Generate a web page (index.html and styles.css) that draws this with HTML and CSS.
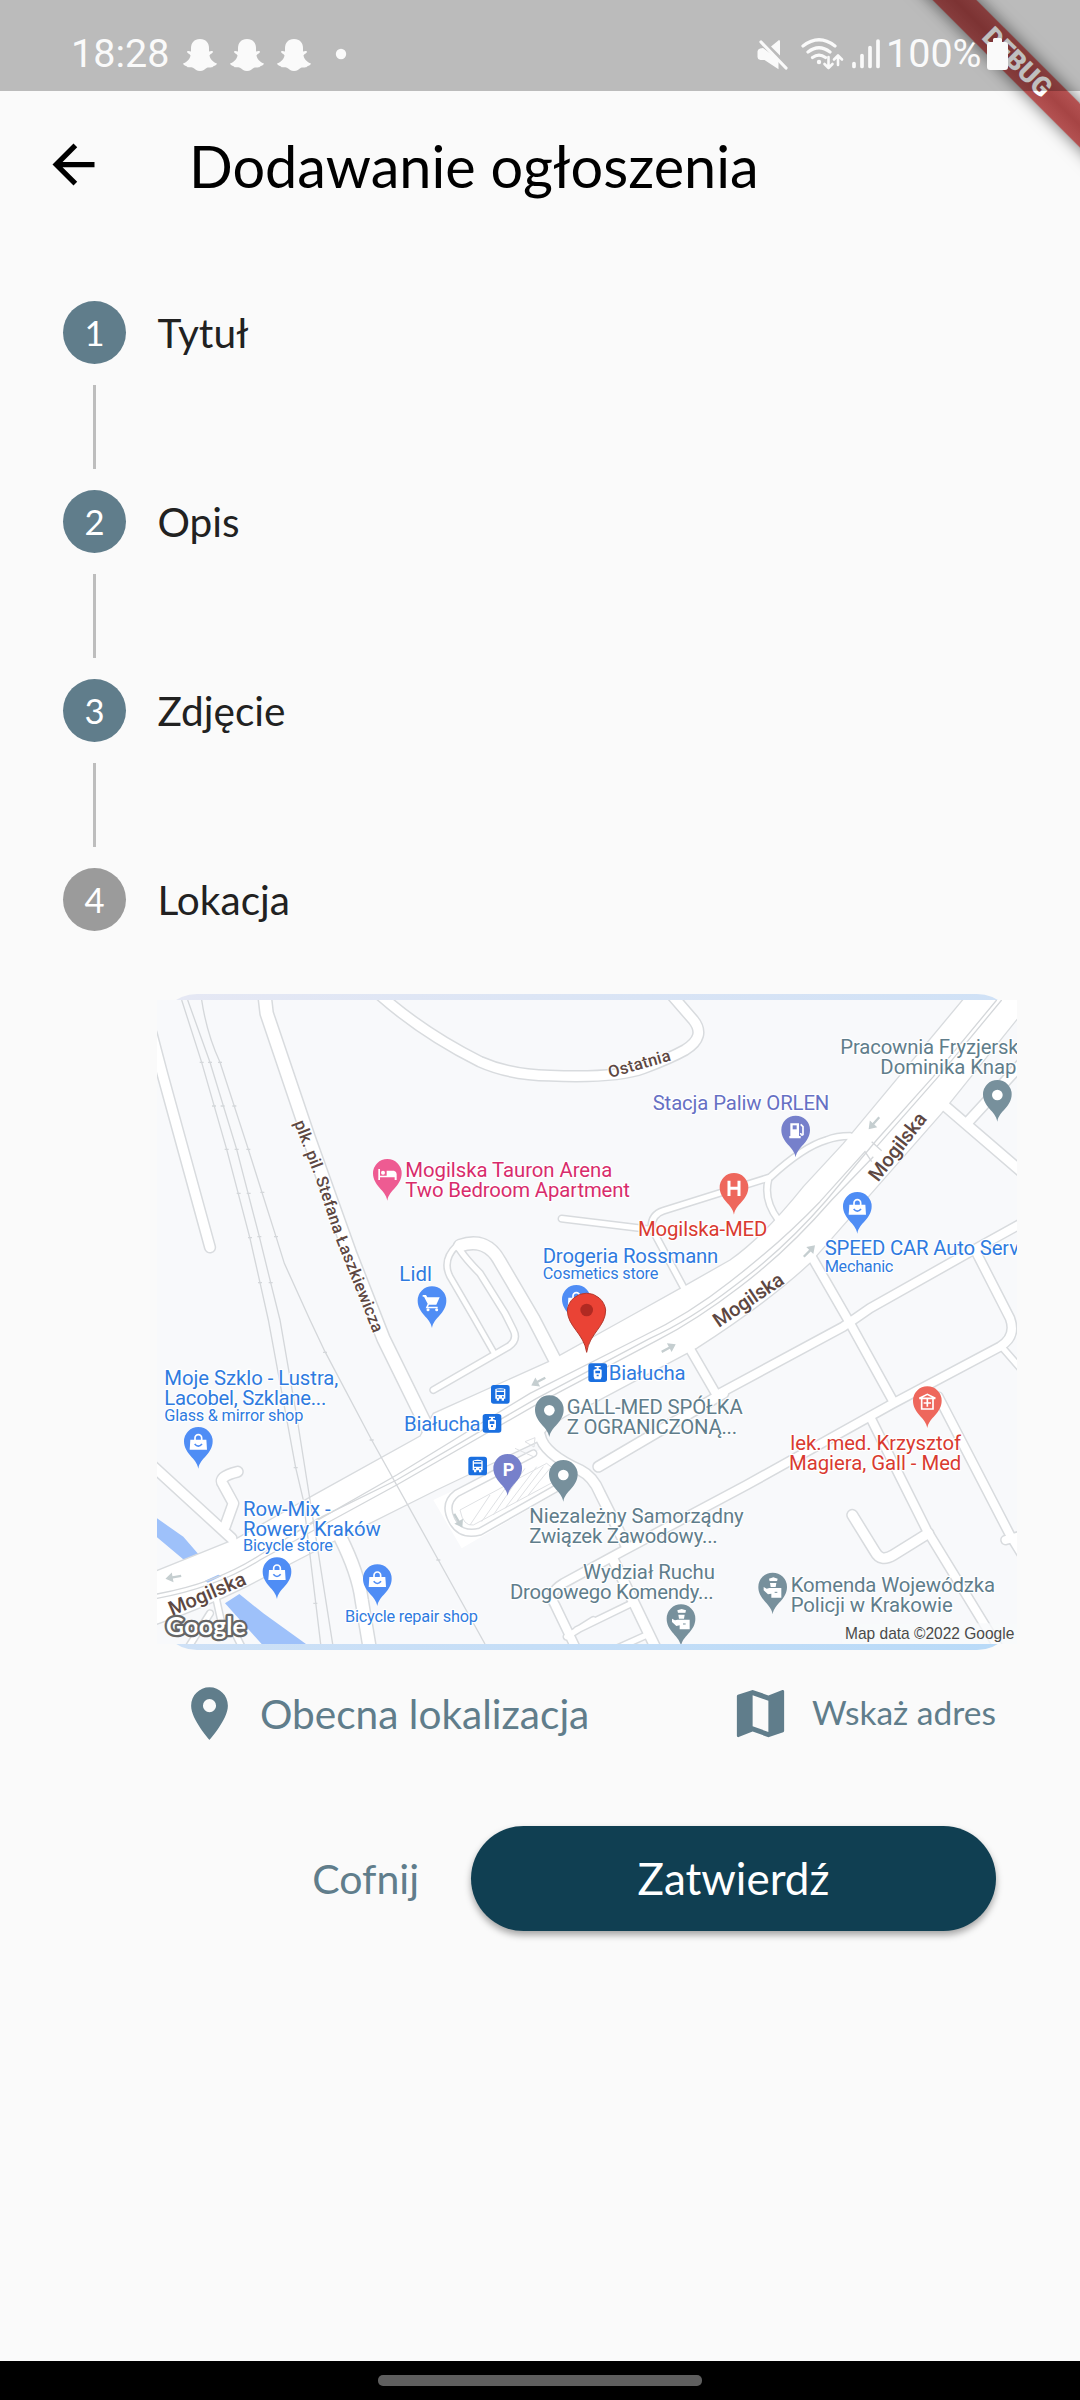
FILE: index.html
```html
<!DOCTYPE html>
<html lang="pl">
<head>
<meta charset="utf-8">
<title>Dodawanie ogłoszenia</title>
<link rel="stylesheet" href="styles.css">
</head>
<body>
<div class="screen">
  <div class="debug"><span class="debug-band">DEBUG</span></div>

  <header class="status">
    <span class="clock">18:28</span>
    <svg class="notes" width="164" height="34" viewBox="0 0 164 34">
      <defs><path id="ghost" d="M17 1C11 1 8 5 8 10v3.500c-2-.8-4-.8-4 .2 0 1.500 2.500 2 3.500 3.500C7 21 4 24 0 25.500c.5 2 3 2 4 3 .5 1.500 4 .5 6 1.200C12 31 14 33 17 33s5-2 7-3.300c2-.7 5.500.3 6-1.200 1-1 3.500-1 4-3-4-1.500-7-4.500-7.500-8.300 1-1.500 3.500-2 3.500-3.500 0-1-2-1-4-.2V10c0-5-3-9-9-9z"/></defs>
      <use href="#ghost"/><use href="#ghost" x="47"/><use href="#ghost" x="94"/>
      <circle cx="158" cy="16" r="5.200"/>
    </svg>
    <svg class="signals" width="130" height="34" viewBox="757 38 130 34">
      <path d="M760 48.500q-2.500 1-2.500 3v5q0 3 3 3.500h4l14 9.300v-9.800L763 48z M771 46.500l8-6.500q1 0 1 1.500v14z"/>
      <path class="line" d="M761 42l25 26"/>
      <g class="line">
        <path d="M803 46q16-12.500 32 0M808 52q11-8.500 22 0M812.500 57.500q6.500-4.800 13 0"/>
        <path class="thin" d="M828.500 57v11m-4-4l4 4 4-4M838 65V56m-4 3.500l4-4 4 4"/>
      </g>
      <circle cx="819" cy="62" r="2.200"/>
      <path class="bars" d="M854 63.500v3M862 55.500v11M870 47.500v19M878 41v25.500"/>
    </svg>
    <span class="percent">100%</span>
    <svg class="battery" width="21" height="32" viewBox="0 0 21 32"><path d="M6 4V1.500Q6 0 7.500 0h6Q15 0 15 1.500V4h3q3 0 3 3v22q0 3-3 3H3q-3 0-3-3V7q0-3 3-3z"/></svg>
  </header>

  <div class="appbar">
    <svg class="back" width="63" height="63" viewBox="0 0 24 24"><path d="M20 11H7.830l5.590-5.590L12 4l-8 8 8 8 1.410-1.410L7.830 13H20v-2z"/></svg>
    <h1>Dodawanie ogłoszenia</h1>
  </div>

  <main>
    <ol class="steps">
      <li><span class="num">1</span><span>Tytuł</span></li>
      <li class="link"></li>
      <li><span class="num">2</span><span>Opis</span></li>
      <li class="link"></li>
      <li><span class="num">3</span><span>Zdjęcie</span></li>
      <li class="link"></li>
      <li><span class="num off">4</span><span>Lokacja</span></li>
    </ol>

    <section class="content">
      <div class="mapbox">
        <svg class="map" width="860" height="644" viewBox="21 60 2580 1932" preserveAspectRatio="none">
          <defs>
            <path id="pin" d="M0 82C-5 50-43 38-43 0A43 43 0 0 1 43 0C43 38 5 50 0 82Z"/>
            <g id="bag"><path fill="#fff" d="M-24-8h48l2 30h-52z"/><path fill="none" stroke="#fff" stroke-width="5" d="M-10-6v-7a10 10 0 0 1 20 0v7"/><path fill="none" stroke="#4f8df5" stroke-width="5" d="M-11 5q11 13 22 0"/></g>
            <g id="cop"><path fill="#fff" d="M-11-27l13-4 13 4-2 8H-9zM-8-14h19l-2 12H-6zM-27-2l9 5 8-2h36v29H-4V18l-10 2-13-12z"/><path stroke="#77909c" stroke-width="3" d="M-10-18h24M6 14h8"/></g>
            <g id="bus"><rect x="-28" y="-28" width="56" height="56" rx="8" fill="#1a6fe0"/><path fill="#fff" d="M-15-16q15-5 30 0v29h-4v6h-7v-6h-8v6h-7v-6h-4z"/><path stroke="#1a6fe0" stroke-width="4" d="M-11-13h22"/><path fill="#1a6fe0" d="M-11-7h22v9h-22zM-10 6h5v4h-5zM5 6h5v4H5z"/></g>
            <g id="tram"><rect x="-28" y="-28" width="56" height="56" rx="8" fill="#1a6fe0"/><path fill="#fff" d="M-9-20H9v4H3v4l9 3v21l-3 8H-9l-3-8V-9l9-3v-4h-6z"/><path fill="#1a6fe0" d="M-7-6H7v8H-7zM-3 6h6v5h-6z"/></g>
            <path id="arrow" d="M-24-3H2v-12L24 0 2 15V4h-26z" fill="#c5ced0"/>
            <g id="roads">
              <path class="w28" d="M5 160L38 285 180 802"/>
              <path class="w36" d="M343 40L350 100 475 470 600 820 700 1075 835 1350"/>
              <path class="w28" d="M690 45Q820 160 990 245Q1080 285 1200 287Q1400 295 1480 265Q1560 235 1605 210Q1670 170 1630 120L1565 45"/>
              <path class="w16" d="M1235 716L1500 748"/>
              <path class="w16" d="M1505 750Q1500 705 1540 692L1700 642 1860 592Q1960 500 2030 480Q2060 468 2100 468"/>
              <path class="w16" d="M1505 745L1610 940M1855 600Q1840 660 1885 720"/>
              <path class="w34" d="M930 797Q1010 770 1050 845L1150 1015 1225 1160"/>
              <path class="w14" d="M920 797Q875 840 900 890L970 1010 1030 1115"/>
              <path class="w16" d="M930 810Q950 840 990 880L1065 1000 1090 1050Q1105 1080 1075 1100L850 1230"/>
              <path class="w28" d="M2370 365L2620 580M2455 425L2620 245"/>
              <path class="w24" d="M2620 727L2470 810 2160 985Q2110 1020 2080 1040L1700 1245"/>
              <path class="w24" d="M1985 830L2100 1030 2230 1265"/>
              <path class="w24" d="M2475 810L2580 1015Q2600 1070 2550 1100L2230 1270 1790 1515 1420 1712 1240 1810Q1190 1840 1215 1875L1280 2010"/>
              <path class="w24" d="M1610 1090L1700 1245"/>
              <path class="w28" d="M1720 1240L1345 1460"/>
              <path class="w24" d="M2160 1310L2330 1650 2550 2010"/>
              <path class="w24" d="M2365 1250L2580 1665 2620 1730M2567 1680L2620 1665"/>
              <path class="w28" d="M2107 1605L2175 1715Q2192 1748 2230 1725L2335 1660"/>
              <path class="w16" d="M2555 1100L2620 1175"/>
              <path class="w28" d="M1170 1365Q1180 1420 1290 1470Q1330 1490 1350 1540L1430 1700M1390 1740L1520 2010"/>
              <path class="w16" d="M1280 1950L1445 1870M1390 2010L1490 1965M1250 1970L1330 1920"/>
              <path class="w28" d="M5 1455L245 1675M263 1475Q200 1490 220 1515L250 1570 225 1640"/>
              <path class="w36" d="M570 1670Q625 1780 635 1860L660 2010"/>
              <path class="w16" d="M195 1840L215 1930M110 2010L180 1900M235 1920L280 2010"/>
              <path class="w16" d="M1150 1420L920 1540Q880 1570 905 1620Q930 1670 990 1655L1245 1510"/>
            </g>
          </defs>
          <rect x="21" y="60" width="2580" height="1932" fill="#f8f9fb"/>
          <path fill="#9ec1fa" d="M21 1615L100 1670 150 1728 105 1742 21 1672zM268 1842L340 1900 468 1992H335L225 1870z"/>
          <path fill="#fff" d="M850 1560L1190 1400 1270 1510 935 1705z"/>
          <g class="edge"><use href="#roads"/></g>
          <path fill="#fff" stroke="#d8dbde" stroke-width="4" d="M0 1780L260 1675 500 1540 810 1368 850 1300 1195 1145 1420 1020 1590 925 1740 840Q1840 770 1960 620L2080 490 2450 45H2660L2375 400 1980 850Q1850 970 1640 1105L1330 1270Q1200 1320 1165 1385L860 1530 560 1680 290 1820Q150 1890 0 1940z"/>
          <g class="fill"><use href="#roads"/></g>
          <path fill="none" stroke="#dfe1e4" stroke-width="3" d="M930 1590L1190 1450 1240 1490 970 1635Q940 1640 930 1590zM960 1635l60-90M995 1625l85-120M1030 1605l95-140M1065 1585l95-125M1100 1565l80-105M1135 1545l65-80M1095 1405l55 25M1125 1385l30-12-3 28z"/>
          <path fill="#9ec1fa" d="M165 1802l40-18 10 4-42 20z"/>
          <g class="rail">
            <path d="M95 60L155 247 230 508 300 775 330 908 355 1020 437 1463 460 1560 512 1992"/>
            <path d="M113 60L180 247 260 508 328 770 362 908 390 1020 442 1320 480 1560 548 1992"/>
            <path d="M155 60Q170 160 210 247L295 508 378 770 403 850 480 1020 525 1115 665 1380 865 1740 1005 1992"/>
            <path d="M21 1842Q200 1810 330 1725L500 1618 740 1500 1160 1255 1500 1075Q1620 1020 1750 920Q1900 810 2030 660L2180 480 2350 290 2540 60"/>
            <path d="M21 1855Q200 1822 330 1740L520 1635 740 1515 1180 1262 1520 1082Q1640 1020 1770 920Q1910 815 2045 660L2170 530"/>
            <path d="M420 1668L740 1485 1140 1240 1480 1068Q1620 1000 1740 905Q1890 790 2010 665L2145 515 2165 545M2165 485L2195 512M2180 500L2365 290 2555 60"/>
            <path d="M149 247h12M174 247h12M204 247h12M186 378h12M212 378h12M247 378h12M224 508h12M254 508h12M289 508h12M260 640h12M290 640h12M331 637h12M294 773h12M322 770h12M372 770h12M324 908h12M356 908h12M659 1380h12M431 1463h12M859 1740h12M490 1870h12M519 1117h12"/>
          </g>
          <use href="#arrow" transform="translate(2172 430) rotate(132)"/>
          <use href="#arrow" transform="translate(1978 813) rotate(-45)"/>
          <use href="#arrow" transform="translate(1556 1104) rotate(-28)"/>
          <use href="#arrow" transform="translate(1165 1205) rotate(152)"/>
          <use href="#arrow" transform="translate(70 1792) rotate(170)"/>
          <use href="#arrow" transform="translate(925 1622) rotate(60)"/>

          <g class="street">
            <path id="lasz" d="M432 428L500 605 556 775 672 1065" fill="none" stroke="none"/>
            <text class="s48"><textPath href="#lasz" textLength="676">plk. pil. Stefana Łaszkiewicza</textPath></text>
            <text class="s48" transform="translate(1380 294) rotate(-16)" textLength="192">Ostatnia</text>
            <text transform="translate(2184 608) rotate(-52)" textLength="242">Mogilska</text>
            <text transform="translate(1706 1044) rotate(-34)" textLength="242">Mogilska</text>
            <text transform="translate(66 1908) rotate(-23)" textLength="246">Mogilska</text>
          </g>

          <g fill="#ee5b92"><use href="#pin" x="712" y="580"/></g>
          <g fill="#4f8df5"><use href="#pin" x="846" y="962"/><use href="#pin" x="1279" y="958"/><use href="#pin" x="2122" y="679"/><use href="#pin" x="145" y="1384"/><use href="#pin" x="381" y="1775"/><use href="#pin" x="682" y="1796"/></g>
          <g fill="#7680cb"><use href="#pin" x="1937" y="450"/><use href="#pin" x="1073" y="1465"/></g>
          <g fill="#ee675c"><use href="#pin" x="1752" y="622"/><use href="#pin" x="2332" y="1262"/></g>
          <g fill="#77909c"><use href="#pin" x="2542" y="343"/><use href="#pin" x="1198" y="1289"/><use href="#pin" x="1240" y="1483"/><use href="#pin" x="1868" y="1821"/><use href="#pin" x="1593" y="1916"/></g>
          <g fill="#fff"><circle cx="2542" cy="345" r="16"/><circle cx="1198" cy="1291" r="16"/><circle cx="1240" cy="1485" r="16"/></g>
          <use href="#bag" x="2122" y="682"/><use href="#bag" x="145" y="1387"/><use href="#bag" x="381" y="1778"/><use href="#bag" x="682" y="1799"/><use href="#bag" x="1279" y="961"/>
          <use href="#cop" x="1868" y="1823"/><use href="#cop" x="1593" y="1918"/>
          <path fill="#fff" d="M685 567h5v20h20v-15h22q8 2 8 10v18h-6v-8h-44v8h-5z"/><circle cx="699" cy="578" r="6" fill="#fff"/>
          <path fill="#fff" d="M818 945h10l4 7h37l-10 22h-22l-3 6h29v5h-36l6-14-11-21h-4z"/><circle cx="834" cy="989" r="4.500" fill="#fff"/><circle cx="860" cy="989" r="4.500" fill="#fff"/>
          <path fill="#fff" d="M1921 430h26v38h5v7h-34v-7h3z"/><rect x="1928" y="436" width="12" height="12" fill="#7680cb"/><path fill="none" stroke="#fff" stroke-width="5" d="M1952 433l7 7v24q-6 4-7-5"/>
          <path fill="none" stroke="#fff" stroke-width="9" d="M1737 602v46M1767 602v46M1737 625h30"/>
          <path fill="none" stroke="#fff" stroke-width="5" d="M2315 1255v32h34v-32M2308 1255l24-12 24 12zM2332 1258v22M2321 1269h22"/>
          <text class="park" x="1058" y="1488">P</text>
          <use href="#bus" x="1051" y="1243"/><use href="#bus" x="983" y="1458"/><use href="#tram" x="1026" y="1330"/><use href="#tram" x="1343" y="1178"/>
          <path fill="#ea4335" stroke="#b3382c" stroke-width="3" d="M1310 1117C1302 1060 1252 1040 1252 990A58 58 0 0 1 1367 990C1367 1040 1318 1060 1310 1117Z"/><circle cx="1310" cy="990" r="19" fill="#b02a22"/>

          <g class="label pink"><text x="766" y="592" textLength="621">Mogilska Tauron Arena</text><text x="766" y="652" textLength="674">Two Bedroom Apartment</text></g>
          <g class="label blue">
            <text x="748" y="902" textLength="98">Lidl</text>
            <text x="1178" y="850" textLength="527">Drogeria Rossmann</text><text class="sub" x="1178" y="896" textLength="347">Cosmetics store</text>
            <text x="2024" y="825" textLength="583">SPEED CAR Auto Serv</text><text class="sub" x="2024" y="876" textLength="206">Mechanic</text>
            <text x="43" y="1216" textLength="522">Moje Szklo - Lustra,</text><text x="43" y="1276" textLength="486">Lacobel, Szklane...</text><text class="sub" x="43" y="1322" textLength="417">Glass &amp; mirror shop</text>
            <text x="279" y="1607" textLength="263">Row-Mix -</text><text x="279" y="1667" textLength="413">Rowery Kraków</text><text class="sub" x="279" y="1713" textLength="270">Bicycle store</text>
            <text class="sub" x="585" y="1927" textLength="399">Bicycle repair shop</text>
            <text x="762" y="1353" textLength="230">Białucha</text><text x="1376" y="1199" textLength="231">Białucha</text>
          </g>
          <g class="label violet"><text x="1508" y="390" textLength="530">Stacja Paliw ORLEN</text></g>
          <g class="label red"><text x="1464" y="769" textLength="388">Mogilska-MED</text><text x="1921" y="1410" textLength="512">lek. med. Krzysztof</text><text x="1917" y="1470" textLength="517">Magiera, Gall - Med</text></g>
          <g class="label slate">
            <text x="2071" y="223" textLength="535">Pracownia Fryzjersk</text><text x="2191" y="283" textLength="408">Dominika Knap</text>
            <text x="1250" y="1302" textLength="528">GALL-MED SPÓŁKA</text><text x="1250" y="1362" textLength="511">Z OGRANICZONĄ...</text>
            <text x="1138" y="1629" textLength="643">Niezależny Samorządny</text><text x="1138" y="1688" textLength="565">Związek Zawodowy...</text>
            <text x="1299" y="1796" textLength="396">Wydział Ruchu</text><text x="1080" y="1857" textLength="611">Drogowego Komendy...</text>
            <text x="1922" y="1835" textLength="613">Komenda Wojewódzka</text><text x="1922" y="1896" textLength="486">Policji w Krakowie</text>
          </g>
          <rect x="2075" y="1930" width="526" height="62" fill="#f8f9fb" opacity=".75"/>
          <text class="credit" x="2085" y="1976" textLength="508" lengthAdjust="spacingAndGlyphs">Map data ©2022 Google</text>
          <text class="google" x="48" y="1966" textLength="240">Google</text>
        </svg>
      </div>

      <div class="row location">
        <svg width="63" height="63" viewBox="0 0 24 24"><path d="M12 2C8.130 2 5 5.130 5 9c0 5.250 7 13 7 13s7-7.750 7-13c0-3.870-3.130-7-7-7zm0 9.500a2.500 2.500 0 0 1 0-5 2.500 2.500 0 0 1 0 5z"/></svg>
        <span class="current">Obecna lokalizacja</span>
        <svg width="63" height="63" viewBox="0 0 24 24"><path d="M20.500 3l-.16.030L15 5.100 9 3 3.360 4.900c-.21.070-.36.250-.36.480V20.500c0 .28.220.5.500.5l.16-.030L9 18.900l6 2.100 5.640-1.900c.21-.070.36-.25.360-.48V3.500c0-.28-.22-.5-.5-.5zM15 19l-6-2.110V5l6 2.110V19z"/></svg>
        <span class="address">Wskaż adres</span>
      </div>

      <div class="row actions">
        <span class="cancel">Cofnij</span>
        <button class="confirm">Zatwierdź</button>
      </div>
    </section>
  </main>

  <footer class="nav"><span></span></footer>
</div>
</body>
</html>
```
FILE: styles.css
```css
* { box-sizing: border-box; }
body { margin: 0; background: #fafafa; font-family: Lato, sans-serif; }
.screen { position: relative; display: flex; flex-direction: column; width: 1080px; height: 2400px; overflow: hidden; }

/* debug ribbon over the top right corner */
.debug { position: absolute; top: 0; right: 0; width: 240px; height: 240px; overflow: hidden; }
.debug-band { position: absolute; left: 27px; top: 47px; width: 300px; height: 31px; transform: rotate(45deg); background: linear-gradient(rgba(183, 28, 28, .63), rgba(183, 28, 28, .63)), linear-gradient(rgba(0, 0, 0, .3), rgba(0, 0, 0, .45) 50%, rgba(0, 0, 0, .3)); box-shadow: 0 0 16px 1px rgba(0, 0, 0, .5); color: #fff; font: 900 26.800px/31px Roboto, sans-serif; text-align: center; }

.status { position: relative; z-index: 1; display: flex; height: 91px; padding: 38px 72px 0 71px; background: rgba(0, 0, 0, .25); color: #fafafa; font: 39.500px/32px Roboto, sans-serif; }
.status svg { fill: #fafafa; }
.clock { width: 112px; }
.notes { margin-right: auto; }
.line, .bars { fill: none; stroke: #fafafa; stroke-width: 3.200; stroke-linecap: round; stroke-linejoin: round; }
.thin { stroke-width: 2.600; }
.bars { stroke-width: 3.700; }
.signals { margin-right: -1px; }
.percent { width: 101px; }

.appbar { display: flex; align-items: center; height: 147px; padding-left: 42px; }
.appbar h1 { margin: 2px 0 0 84px; font-size: 57.600px; font-weight: 400; line-height: 70px; color: #000; }

.steps { margin: 0; padding: 63px 0 0 63px; list-style: none; color: #212121; font-size: 40.600px; line-height: 63px; }
.steps li { display: flex; gap: 31.500px; height: 63px; }
.steps .link { width: 3px; height: 84px; margin: 21px 0 21px 30px; background: #bdbdbd; }
.num { width: 63px; border-radius: 50%; background: #607d8b; color: #fff; font-size: 34.650px; text-align: center; }
.num.off { background: #9b9b9b; }

.content { padding: 63px 63px 0 157px; }
.mapbox { width: 860px; height: 656px; padding: 6px 0; border-radius: 40px; background: linear-gradient(143deg, #e6e8f4, #b8daf8); }
.map { display: block; }
.map text { font-family: Roboto, sans-serif; }
.w14 { --w: 14px; } .w16 { --w: 16px; } .w24 { --w: 24px; } .w28 { --w: 28px; } .w34 { --w: 34px; } .w36 { --w: 36px; }
#roads path { fill: none; stroke-width: calc(var(--w) + var(--rim)); stroke-linecap: round; stroke-linejoin: round; }
.edge { --rim: 9px; stroke: #d8dbde; }
.fill { --rim: 0px; stroke: #fff; }
.rail { fill: none; stroke: #d4d7da; stroke-width: 4; }
.street text { font-size: 60px; font-weight: 500; fill: #5d4742; stroke: #fff; stroke-width: 6; paint-order: stroke; }
.street .s48 { font-size: 50px; }
.label text { font-size: 61px; stroke: #fff; stroke-width: 7; stroke-linejoin: round; paint-order: stroke; }
.label .sub { font-size: 49px; }
.pink { fill: #d82c6c; } .blue { fill: #2f7be0; } .violet { fill: #6670c4; } .red { fill: #d93a30; } .slate { fill: #607d8b; }
.park { font-size: 54px; font-weight: 700; fill: #fff; }
.map .credit { font-family: "Liberation Sans", sans-serif; font-size: 49px; fill: #4a4a4a; }
.map .google { font-family: Lato, sans-serif; font-size: 76px; font-weight: 700; fill: #fff; stroke: #666; stroke-width: 14; stroke-linejoin: round; paint-order: stroke; }

.row { display: flex; align-items: center; color: #607d8b; }
.row svg { fill: #607d8b; }
.location { height: 63px; margin-top: 32px; padding-left: 21px; }
.current { width: 469px; margin-left: 19px; font-size: 40.600px; line-height: 63px; }
.address { margin: -3px 0 0 20px; white-space: nowrap; font-size: 33.500px; line-height: 63px; }
.actions { justify-content: flex-end; height: 105px; margin-top: 81px; padding-right: 21px; }
.cancel { margin-right: 52px; font-size: 41px; }
.confirm { width: 525px; height: 105px; padding: 0 0 2px; border: 0; border-radius: 53px; background: #103f52; box-shadow: 0 4px 7px rgba(0, 0, 0, .35); color: #fff; font: 44px Lato, sans-serif; }

.nav { display: flex; justify-content: center; align-items: center; height: 39px; margin-top: auto; background: #000; }
.nav span { width: 324px; height: 11px; border-radius: 5px; background: #5f5f5f; }
```
